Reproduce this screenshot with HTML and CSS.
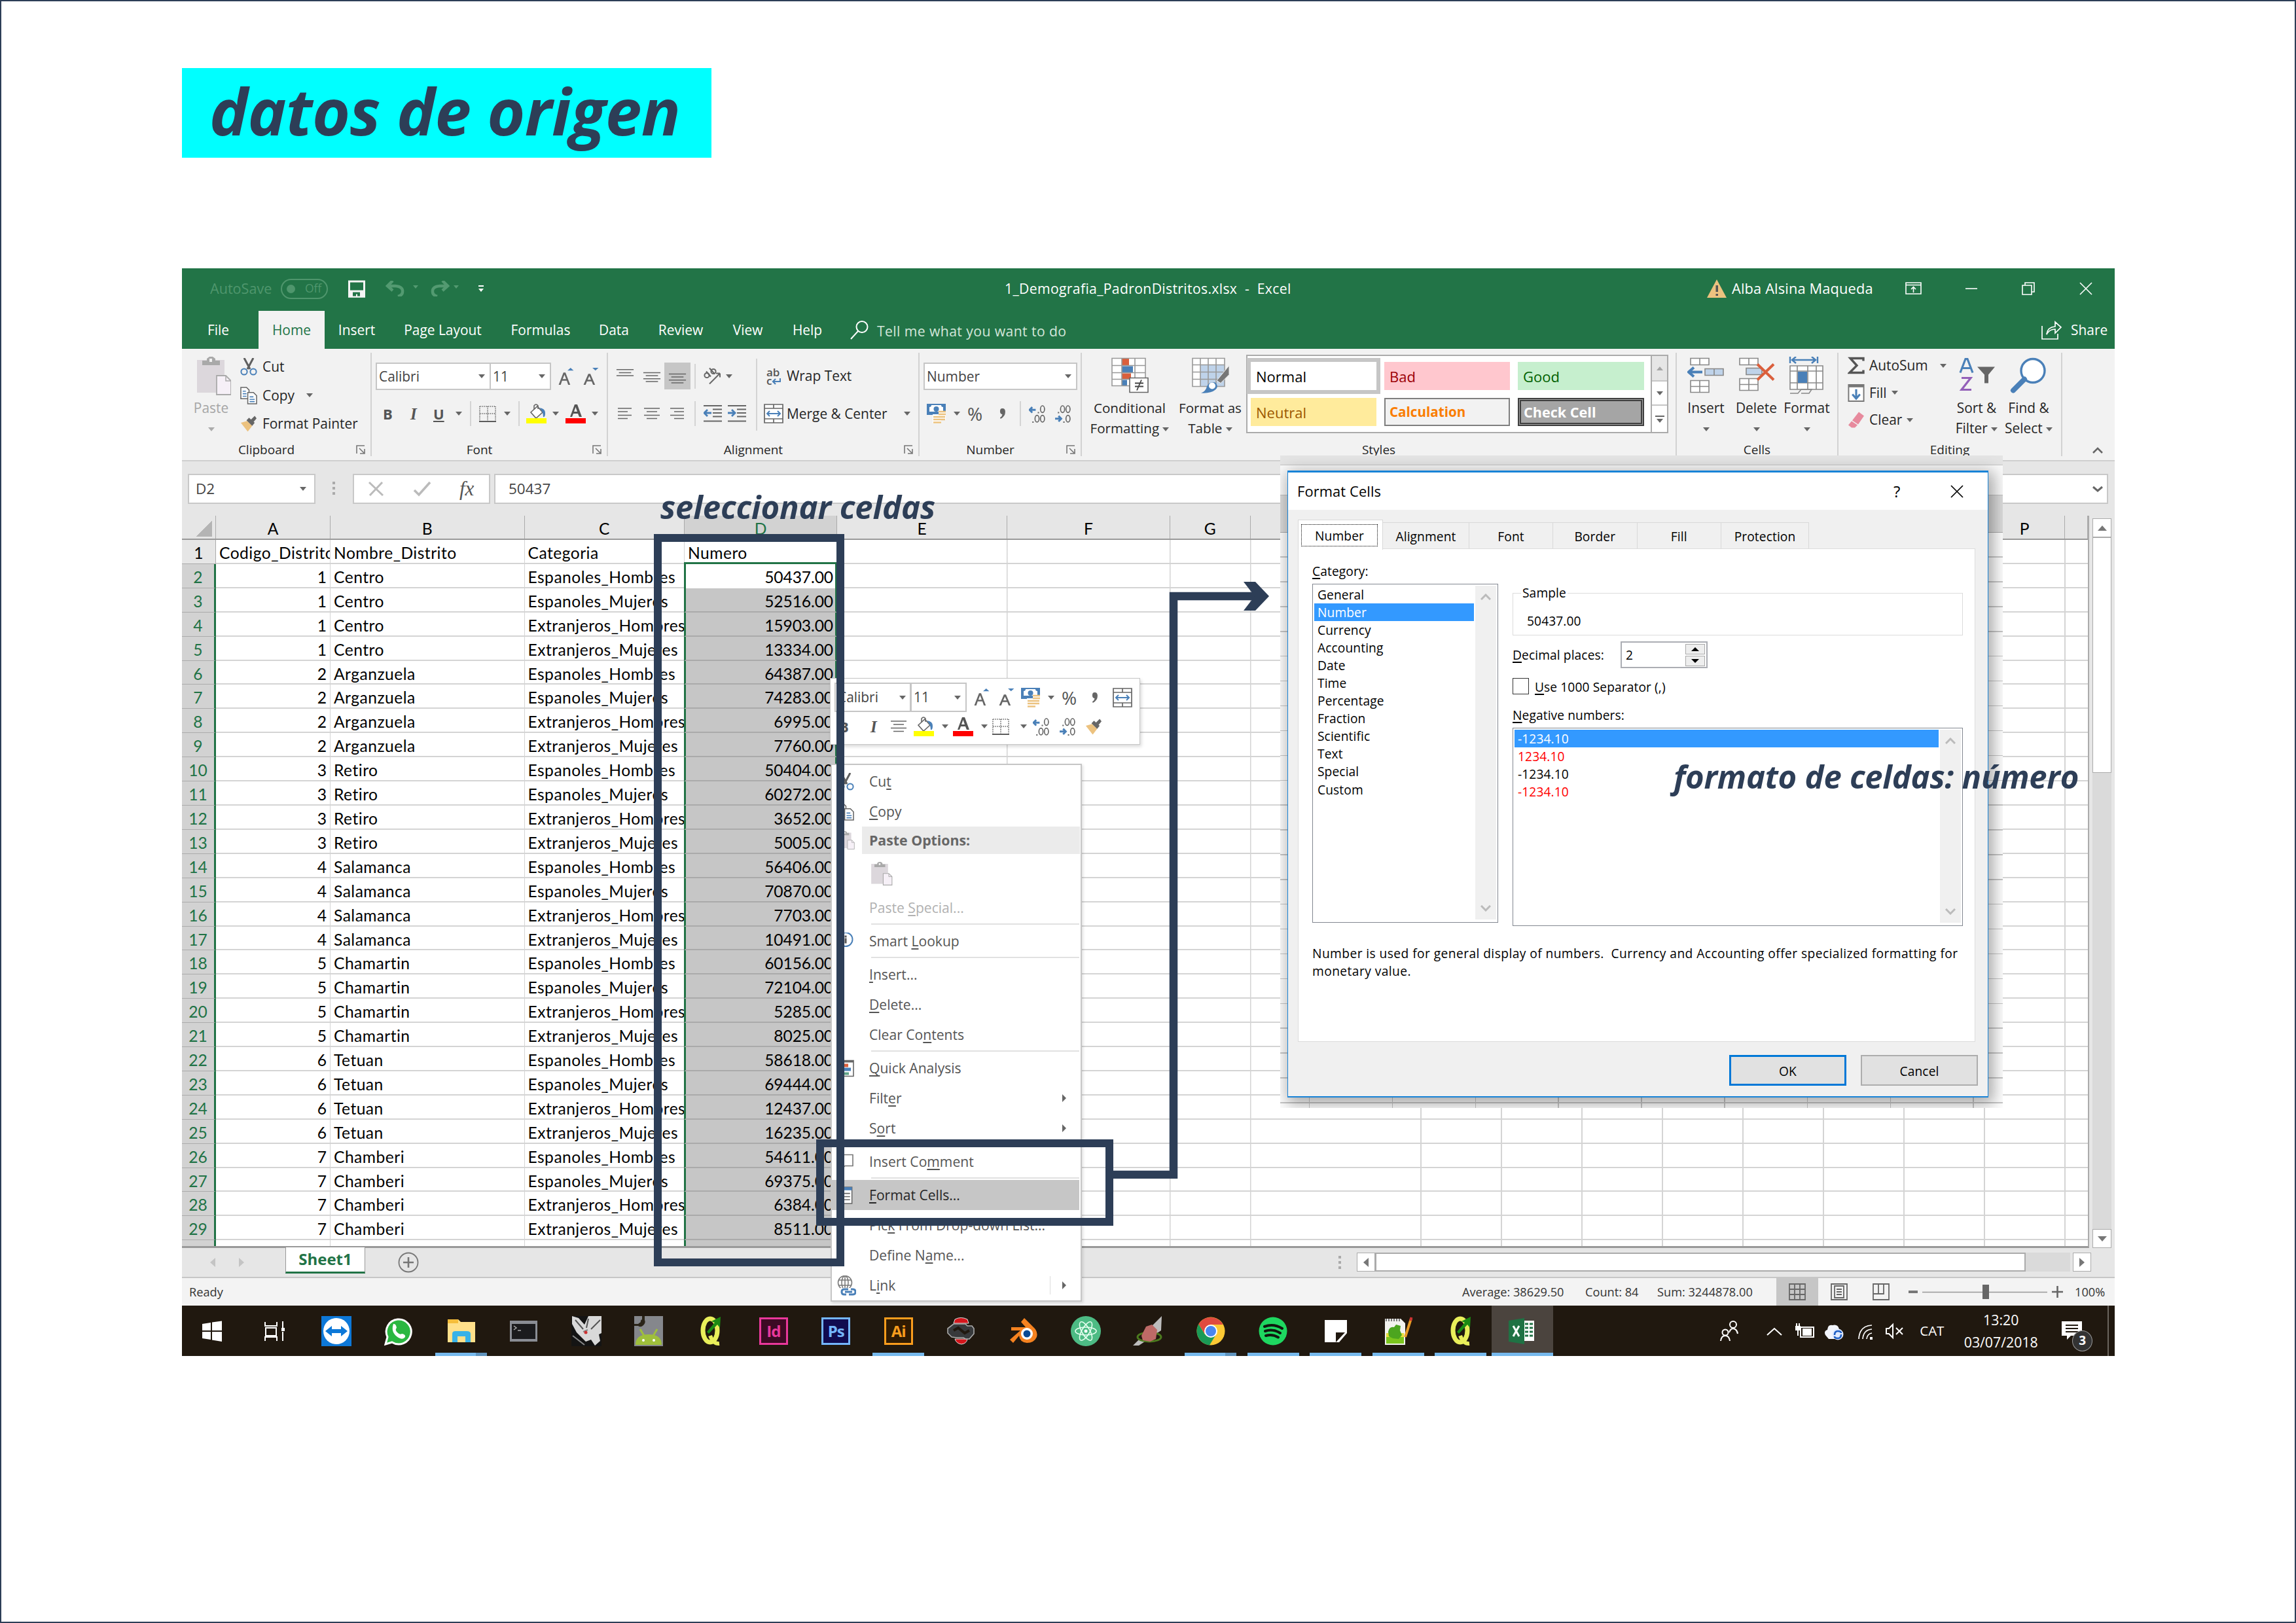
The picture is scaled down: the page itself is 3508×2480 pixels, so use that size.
FILE: index.html
```html
<!DOCTYPE html>
<html lang="es">
<head>
<meta charset="utf-8">
<title>datos de origen</title>
<link rel="stylesheet" href="styles.css">
</head>
<body>
<svg width="0" height="0" class="defs" aria-hidden="true">
  <symbol id="caret" viewBox="0 0 10 6"><path d="M0 0h10L5 6z" fill="#666"/></symbol>
  <symbol id="launch" viewBox="0 0 14 14"><path d="M1 13V1h12M5 5l7 7M13 6v7H6" fill="none" stroke="#777" stroke-width="1.6"/></symbol>
  <symbol id="paste" viewBox="0 0 52 59"><path d="M0 5h42v50H0z" fill="#dcd7dc"/><path d="M8 6h7V3l4-3h5l4 3v3h7v7H8z" fill="#a9a9a9"/><rect x="19" y="3" width="4" height="5" fill="#f2f2f2"/><path d="M30 29h14l8 8v21H30z" fill="#f6f0f7" stroke="#aaa" stroke-width="1.8"/><path d="M44 29v8h8" fill="none" stroke="#aaa" stroke-width="1.5"/></symbol>
  <symbol id="cut" viewBox="0 0 26 27"><path d="M6 0l9 17M20 0l-9 17" stroke="#5f5f5f" stroke-width="3" fill="none"/><circle cx="6" cy="21" r="4.6" fill="none" stroke="#4a80b8" stroke-width="2"/><circle cx="20" cy="21" r="4.6" fill="none" stroke="#4a80b8" stroke-width="2"/></symbol>
  <symbol id="copy" viewBox="0 0 27 28"><path d="M1 1h9l4 4v14H1z" fill="#fff" stroke="#666" stroke-width="1.6"/><path d="M12 9h9l5 5v13H12z" fill="#fff" stroke="#666" stroke-width="1.6"/><path d="M4 7h5M4 11h6M4 15h6M15 16h6M15 20h8M15 23.500h8" stroke="#4a80b8" stroke-width="1.7"/></symbol>
  <symbol id="brush" viewBox="0 0 27 25"><path d="M1 11l10-3 8 8-7 9z" fill="#ecc27f"/><path d="M10 7l4-4 9 8-4 5z" fill="#666"/><path d="M17 6l6-6 3 4-5 6z" fill="#666"/></symbol>
  <symbol id="growA" viewBox="0 0 24 26"><path d="M1 25L8 7h3l7 18h-3l-2-6H6l-2 6zM7 16.500h5L9.500 10z" fill="#666" fill-rule="evenodd"/><path d="M14 4l4.500-4L23 4z" fill="#4a80b8"/></symbol>
  <symbol id="shrinkA" viewBox="0 0 24 26"><path d="M1 25L8 9h3l7 16h-3l-2-5H6l-2 5zM7 17.500h5l-2.500-5.500z" fill="#666" fill-rule="evenodd"/><path d="M14 0h9l-4.500 4z" fill="#4a80b8"/></symbol>
  <symbol id="borders" viewBox="0 0 27 26"><path d="M1 1h25M1 12.500h25M1 1v23M13.500 1v23M26 1v23" stroke="#666" stroke-width="1.6" stroke-dasharray="1.6 1.6" fill="none"/><path d="M0 25h27" stroke="#555" stroke-width="2"/></symbol>
  <symbol id="bucket" viewBox="0 0 31 30"><path d="M7 13l10-9 8 9-10 9z" fill="#fff" stroke="#666" stroke-width="1.6"/><path d="M12 9V3q3-4 6 0v5" fill="none" stroke="#666" stroke-width="1.6"/><path d="M20 6q9 1 9 8t-3 6q0-8-6-14z" fill="#4a80b8"/><path d="M0 22h31v8H0z" fill="#ff0"/></symbol>
  <symbol id="fontcol" viewBox="0 0 31 30"><path d="M7 20L14 1h4l7 19h-4l-2-5h-7l-2 5zM13 12h5l-2.500-7z" fill="#555" fill-rule="evenodd"/><path d="M0 22h31v8H0z" fill="#f00"/></symbol>
  <symbol id="al-top" viewBox="0 0 28 30"><path d="M0 4h28M4 9h20M0 14h28" stroke="#666" stroke-width="1.6"/></symbol>
  <symbol id="al-mid" viewBox="0 0 28 30"><path d="M0 9h28M4 14h20M0 19h28M4 23.500h20" stroke="#666" stroke-width="1.6"/></symbol>
  <symbol id="al-left" viewBox="0 0 28 18"><path d="M0 1h21M0 6h15M0 11.500h21M0 16.500h15" stroke="#666" stroke-width="1.7"/></symbol>
  <symbol id="al-center" viewBox="0 0 28 18"><path d="M2 1h24M6 6h16M2 11.500h24M6 16.500h16" stroke="#666" stroke-width="1.7"/></symbol>
  <symbol id="al-right" viewBox="0 0 28 18"><path d="M0 1h21M6 6h15M0 11.500h21M6 16.500h15" stroke="#666" stroke-width="1.7"/></symbol>
  <symbol id="orient" viewBox="0 0 28 27"><g fill="none" stroke="#666" stroke-width="2"><circle cx="5" cy="12" r="3.600"/><path d="M4 6l7 8M9 1l8 9M9 25L25 9M25 9h-6M25 9v6"/><circle cx="15" cy="6" r="3.600"/></g></symbol>
  <symbol id="outdent" viewBox="0 0 28 26"><path d="M0 1h28M14 6.500h14M14 12h14M14 17.500h14M0 24.500h28" stroke="#666" stroke-width="1.8"/><path d="M12 12H2M6 7l-5 5 5 5" stroke="#4a80b8" stroke-width="2.8" fill="none"/></symbol>
  <symbol id="indent" viewBox="0 0 28 26"><path d="M0 1h28M14 6.500h14M14 12h14M14 17.500h14M0 24.500h28" stroke="#666" stroke-width="1.8"/><path d="M0 12h10M6 7l5 5-5 5" stroke="#4a80b8" stroke-width="2.8" fill="none"/></symbol>
  <symbol id="merge" viewBox="0 0 30 30"><path d="M1 1h28v28H1zM1 7h28M1 23h28M15 1v6M15 23v6" fill="#fff" stroke="#666" stroke-width="1.7"/><path d="M5 15h20M9 11l-4 4 4 4M21 11l4 4-4 4" stroke="#4a80b8" stroke-width="2" fill="none"/></symbol>
  <symbol id="money" viewBox="0 0 30 30"><path d="M0 0h29v17H0z" fill="#4a80b8"/><path d="M4 5q3 0 3-3h15q0 3 3 3v7H4z" fill="#fff"/><circle cx="14.500" cy="8" r="4" fill="#4a80b8"/><path d="M9 16h13v14H9z" fill="#fff"/><path d="M18 11h11v14H18z" fill="#fff"/><path d="M18 12h11M18 16h11M10 20h18M10 24h18M10 28.500h12" stroke="#ecc27f" stroke-width="2.6"/></symbol>
  <symbol id="decinc" viewBox="0 0 25 26"><path d="M10 7H1M5 3L1 7l4 4" stroke="#4a80b8" stroke-width="2.800" fill="none"/><g fill="none" stroke="#666" stroke-width="1.600"><ellipse cx="20" cy="6" rx="3" ry="5"/><ellipse cx="12" cy="20" rx="3" ry="5"/><ellipse cx="20" cy="20" rx="3" ry="5"/></g><path d="M13 10h2v2h-2zM5 24h2v2H5z" fill="#666"/></symbol>
  <symbol id="decdec" viewBox="0 0 25 26"><path d="M1 20h9M6 16l4 4-4 4" stroke="#4a80b8" stroke-width="2.800" fill="none"/><g fill="none" stroke="#666" stroke-width="1.600"><ellipse cx="12" cy="6" rx="3" ry="5"/><ellipse cx="20" cy="6" rx="3" ry="5"/><ellipse cx="20" cy="20" rx="3" ry="5"/></g><path d="M5 10h2v2H5zM13 24h2v2h-2z" fill="#666"/></symbol>
  <symbol id="comma" viewBox="0 0 10 18"><path d="M1 5q0-5 4-5 5 0 5 6 0 8-8 12l-1-2q4-3 4-6-4 0-4-5z" fill="#666"/></symbol>
  <symbol id="qgis" viewBox="0 0 46 46"><ellipse cx="22" cy="22" rx="11" ry="18" fill="none" stroke="#e9ef5a" stroke-width="7"/><path d="M22 30q5 13 14 12" fill="none" stroke="#e9ef5a" stroke-width="6"/><path d="M17 24l12-14-5-2L38 1l-1 17-4-5-13 14z" fill="#1c8a14"/></symbol>
</svg>

<main class="slide">
  <h1 class="title">datos de origen</h1>

  <div class="window">
    <header class="titlebar">
      <span class="autosave">AutoSave</span>
      <span class="toggle"><i></i>Off</span>
      <svg class="i26 save" viewBox="0 0 26 26"><path d="M1.500 1.500h23v23h-23z" fill="none" stroke="#f5f5f5" stroke-width="3"/><path d="M0 15h26v11H0z" fill="#f5f5f5"/><path d="M7 18h11v6h-4v-3h-2v3H7z" fill="#227447"/></svg>
      <svg class="undo" viewBox="0 0 112 24"><g fill="none" stroke="#539a71" stroke-width="4.500"><path d="M3 8h12q12 1 11 9 0 5-7 7M11 0L3 8l8 7"/><path d="M95 8H83q-12 1-11 9 0 5 7 7M87 0l8 8-8 7"/></g><path d="M42 7h8l-4 5zM112 7h-8l4 5z" fill="#539a71"/></svg>
      <svg class="qat" viewBox="0 0 8 10"><path d="M0 0h8v2H0zM0 5h8L4 10z" fill="#fff"/></svg>
      <span class="doc">1_Demografia_PadronDistritos.xlsx&nbsp; -&nbsp; Excel</span>
      <svg class="warn" viewBox="0 0 30 28"><path d="M15 0l15 28H0z" fill="#ecc27f"/><path d="M13.500 9h3.500v10h-3.500zM13.500 22h3.500v3h-3.500z" fill="#555"/></svg>
      <span class="user">Alba Alsina Maqueda</span>
      <svg class="winbtns" viewBox="0 0 286 20"><g fill="none" stroke="#fff" stroke-width="1.600"><path d="M1 1h23v17H1zM1 4.500h23M12.500 16V8M9 11l3.500-3.500L16 11"/><path d="M92 10h18"/><path d="M179 5h14v14h-14zM183 5V1h14v14h-4"/><path d="M267 1l18 18M285 1l-18 18"/></g></svg>
    </header>

    <nav class="tabs">
      <span>File</span><span class="on">Home</span><span>Insert</span><span>Page Layout</span><span>Formulas</span><span>Data</span><span>Review</span><span>View</span><span>Help</span>
      <svg class="search" viewBox="0 0 28 29"><circle cx="18" cy="9.500" r="8.500" fill="none" stroke="#fff" stroke-width="2"/><path d="M12 16L1 28" stroke="#fff" stroke-width="2"/></svg>
      <span class="tell">Tell me what you want to do</span>
      <svg class="share-i" viewBox="0 0 32 29"><path d="M1 8v20h24v-8M8 21q1-11 13-12V2l9 8-9 9v-6q-9 0-13 8z" fill="none" stroke="#fff" stroke-width="1.700"/></svg>
      <span class="share">Share</span>
    </nav>

    <section class="ribbon">
      <div class="grp clip">
        <div class="body">
          <div class="big paste-b"><svg class="ic" viewBox="0 0 52 59"><use href="#paste"/></svg><span>Paste</span><span><svg class="caret faint"><use href="#caret"/></svg></span></div>
          <div class="cmds">
            <div><svg class="i26"><use href="#cut"/></svg>Cut</div>
            <div><svg class="i26"><use href="#copy"/></svg>Copy<svg class="caret far"><use href="#caret"/></svg></div>
            <div><svg class="i26"><use href="#brush"/></svg>Format Painter</div>
          </div>
        </div>
        <div class="foot"><span>Clipboard</span><svg class="launch"><use href="#launch"/></svg></div>
      </div>
      <i class="vsep"></i>
      <div class="grp font">
        <div class="body stack">
          <div class="r1">
            <span class="combo">Calibri<svg class="caret"><use href="#caret"/></svg></span>
            <span class="combo size">11<svg class="caret"><use href="#caret"/></svg></span>
            <svg class="i26"><use href="#growA"/></svg><svg class="i26"><use href="#shrinkA"/></svg>
          </div>
          <div class="r2">
            <b>B</b><em>I</em><u>U</u><svg class="caret"><use href="#caret"/></svg><i class="ssep"></i>
            <svg class="i26"><use href="#borders"/></svg><svg class="caret"><use href="#caret"/></svg><i class="ssep"></i>
            <svg class="i31"><use href="#bucket"/></svg><svg class="caret"><use href="#caret"/></svg>
            <svg class="i31"><use href="#fontcol"/></svg><svg class="caret"><use href="#caret"/></svg>
          </div>
        </div>
        <div class="foot"><span>Font</span><svg class="launch"><use href="#launch"/></svg></div>
      </div>
      <i class="vsep"></i>
      <div class="grp align">
        <div class="body">
          <div class="stack al-l">
            <div class="r1"><svg class="i28"><use href="#al-top"/></svg><svg class="i28"><use href="#al-mid"/></svg><span class="pressed"><svg class="i28"><use href="#al-mid"/></svg></span><i class="ssep"></i><svg class="i28"><use href="#orient"/></svg><svg class="caret"><use href="#caret"/></svg></div>
            <div class="r2"><svg class="lines"><use href="#al-left"/></svg><svg class="lines"><use href="#al-center"/></svg><svg class="lines"><use href="#al-right"/></svg><i class="ssep"></i><svg class="i28"><use href="#outdent"/></svg><svg class="i28"><use href="#indent"/></svg></div>
          </div>
          <i class="msep"></i>
          <div class="stack al-r">
            <div class="r1"><span class="abc">ab<br>c<svg viewBox="0 0 14 10"><path d="M13 0v5H3M6 1L2 5l4 4" fill="none" stroke="#4a80b8" stroke-width="2.200"/></svg></span><span>Wrap Text</span></div>
            <div class="r2"><svg class="i30"><use href="#merge"/></svg><span>Merge &amp; Center</span><svg class="caret"><use href="#caret"/></svg></div>
          </div>
        </div>
        <div class="foot"><span>Alignment</span><svg class="launch"><use href="#launch"/></svg></div>
      </div>
      <i class="vsep"></i>
      <div class="grp number">
        <div class="body stack">
          <div class="r1"><span class="combo">Number<svg class="caret"><use href="#caret"/></svg></span></div>
          <div class="r2"><svg class="i30"><use href="#money"/></svg><svg class="caret"><use href="#caret"/></svg><span class="pct">%</span><svg class="comma"><use href="#comma"/></svg><i class="ssep"></i><svg class="i26"><use href="#decinc"/></svg><svg class="i26"><use href="#decdec"/></svg></div>
        </div>
        <div class="foot"><span>Number</span><svg class="launch"><use href="#launch"/></svg></div>
      </div>
      <i class="vsep"></i>
      <div class="grp styles">
        <div class="body">
          <div class="big cond"><svg class="ic" viewBox="0 0 57 54"><path d="M1 1h51v42H1z" fill="#fff"/><path d="M16 1h11v11H16zM16 24h14v9H16z" fill="#da5f3c"/><path d="M16 13h17v10H16zM16 34h8v9h-8z" fill="#4a80b8"/><path d="M1 1h51v42H1zM1 12h51M1 23h51M1 33h51M16 1v42M36 1v42" fill="none" stroke="#999" stroke-width="1.600"/><path d="M28 31h28v22H28z" fill="#fff" stroke="#666" stroke-width="1.600"/><path d="M36 39h13M36 44h13M46 34l-7 16" stroke="#444" stroke-width="1.800"/></svg><span>Conditional</span><span>Formatting <svg class="caret"><use href="#caret"/></svg></span></div>
          <div class="big fmt"><svg class="ic" viewBox="0 0 57 54"><path d="M1 1h49v43H1z" fill="#fff"/><path d="M13 11h37v33H13z" fill="#bfd3ea"/><path d="M1 1h49v43H1zM1 11h49M1 22h49M1 33h49M13 1v43M25 1v43M37 1v43" fill="none" stroke="#999" stroke-width="1.600"/><path d="M57 12v14L44 39l-6-4z" fill="#777" stroke="#f2f2f2"/><path d="M14 54q7-2 9-10 4-8 13-6 6 6 0 11-7 6-22 5z" fill="#4a80b8"/><circle cx="31" cy="43" r="5" fill="#fff"/></svg><span>Format as</span><span>Table <svg class="caret"><use href="#caret"/></svg></span></div>
          <div class="gallery">
            <div class="swatches">
              <span class="sw normal">Normal</span><span class="sw bad">Bad</span><span class="sw good">Good</span>
              <span class="sw neutral">Neutral</span><span class="sw calc">Calculation</span><span class="sw check">Check Cell</span>
            </div>
            <div class="gscroll"><span><svg class="caret up faint"><use href="#caret"/></svg></span><span><svg class="caret"><use href="#caret"/></svg></span><span class="more"><svg class="caret"><use href="#caret"/></svg></span></div>
          </div>
        </div>
        <div class="foot"><span>Styles</span></div>
      </div>
      <i class="vsep"></i>
      <div class="grp cells-g">
        <div class="body">
          <div class="big"><svg class="ic" viewBox="0 0 57 54"><g fill="#fff" stroke="#888" stroke-width="1.600"><path d="M5 1h28v10H5zM19 1v10M5 35h28v18H5zM19 35v18M5 44h28"/><path d="M27 17h28v10H27zM41 17v10" fill="#bfd3ea"/></g><path d="M23 22H3M10 15l-8 7 8 7" stroke="#4a80b8" stroke-width="4" fill="none"/></svg><span>Insert</span><span><svg class="caret"><use href="#caret"/></svg></span></div>
          <div class="big"><svg class="ic" viewBox="0 0 57 54"><g fill="#fff" stroke="#888" stroke-width="1.600"><path d="M3 1h28v10H3zM17 1v10M3 32h28v18H3zM17 32v18M3 41h28"/><path d="M13 16h24v10H13z" fill="#bfd3ea"/></g><path d="M30 10l25 24M55 10L30 34" stroke="#da5f3c" stroke-width="4"/></svg><span>Delete</span><span><svg class="caret"><use href="#caret"/></svg></span></div>
          <div class="big"><svg class="ic" viewBox="0 0 57 57"><path d="M3 0v10M45 0v10M7 5h34M12 0L6 5l6 5M36 0l6 5-6 5" stroke="#4a80b8" stroke-width="2.400" fill="none"/><path d="M3 14h50v36H3z" fill="#fff"/><path d="M3 14h50v36H3zM3 22h50M3 40h50M14 14v36M30 14v36M43 14v36" stroke="#888" stroke-width="1.600" fill="none"/><path d="M15 23h14v17H15z" fill="#4a80b8"/><path d="M3 56h12l5-6h16l-4 6H20" fill="none" stroke="#888" stroke-width="1.500"/></svg><span>Format</span><span><svg class="caret"><use href="#caret"/></svg></span></div>
        </div>
        <div class="foot"><span>Cells</span></div>
      </div>
      <i class="vsep"></i>
      <div class="grp editing">
        <div class="body">
          <div class="cmds">
            <div><svg class="i26" viewBox="0 0 26 26"><path d="M24 6V2H4l10 11L3 24h21v-4" fill="none" stroke="#555" stroke-width="3.400"/></svg>AutoSum<svg class="caret far"><use href="#caret"/></svg></div>
            <div><svg class="i26" viewBox="0 0 26 28"><path d="M1 1h24v26H1z" fill="#fff" stroke="#777" stroke-width="2"/><path d="M1 1h24v4H1z" fill="#777"/><path d="M13 8v15M7 16l6 7 6-7" fill="none" stroke="#4a80b8" stroke-width="3.200"/></svg>Fill<svg class="caret"><use href="#caret"/></svg></div>
            <div><svg class="i26" viewBox="0 0 26 26"><path d="M17 1l8 6-9 13-9-6z" fill="#e78a9d"/><path d="M6 15l9 6-4 4H6l-5-4z" fill="#e78a9d"/></svg>Clear<svg class="caret"><use href="#caret"/></svg></div>
          </div>
          <div class="big sort"><svg class="ic" viewBox="0 0 57 54"><path d="M3 23L11 2h3l8 21M6 16h13" fill="none" stroke="#4a80b8" stroke-width="3.200"/><path d="M5 31h14L5 49h15" fill="none" stroke="#9360b8" stroke-width="3.200"/><path d="M29 14h27L46 26v13h-6V26z" fill="#666"/></svg><span>Sort &amp;</span><span>Filter <svg class="caret"><use href="#caret"/></svg></span></div>
          <div class="big find"><svg class="ic" viewBox="0 0 57 54"><circle cx="35" cy="20" r="18" fill="#fff" stroke="#4a80b8" stroke-width="3.400"/><path d="M22 33L5 50" stroke="#4a80b8" stroke-width="8" stroke-linecap="round"/></svg><span>Find &amp;</span><span>Select <svg class="caret"><use href="#caret"/></svg></span></div>
        </div>
        <div class="foot"><span>Editing</span></div>
      </div>
      <i class="vsep"></i>
      <svg class="collapse" viewBox="0 0 18 10"><path d="M2 9l7-7 7 7" fill="none" stroke="#666" stroke-width="2.600"/></svg>
    </section>

    <section class="fbar">
      <div class="box name">D2<svg class="caret"><use href="#caret"/></svg></div>
      <i class="dots"></i>
      <div class="box fx"><svg viewBox="0 0 100 24"><path d="M2 2l21 20M22 2L3 22" stroke="#bbb" stroke-width="3"/><path d="M71 14l7 7L95 2" fill="none" stroke="#bbb" stroke-width="3.600"/></svg><em>fx</em></div>
      <div class="box input">50437<svg class="chev" viewBox="0 0 16 10"><path d="M1 2l7 6 7-6" fill="none" stroke="#666" stroke-width="3"/></svg></div>
    </section>

    <section class="sheet">
      <div class="grid">
        <div class="cols"><span class="corner"></span><span>A</span><span>B</span><span>C</span><span class="sel">D</span><span>E</span><span>F</span><span>G</span><span></span><span></span><span></span><span></span><span></span><span></span><span></span><span></span><span>P</span><span></span></div>
        <div class="rows">
          <div class="row"><span class="rh">1</span><span>Codigo_Distrito</span><span>Nombre_Distrito</span><span>Categoria</span><span>Numero</span></div>
          <div class="row s first"><span class="rh">2</span><span class="n">1</span><span>Centro</span><span>Espanoles_Hombres</span><span class="n v">50437.00</span></div>
          <div class="row s"><span class="rh">3</span><span class="n">1</span><span>Centro</span><span>Espanoles_Mujeres</span><span class="n v">52516.00</span></div>
          <div class="row s"><span class="rh">4</span><span class="n">1</span><span>Centro</span><span>Extranjeros_Hombres</span><span class="n v">15903.00</span></div>
          <div class="row s"><span class="rh">5</span><span class="n">1</span><span>Centro</span><span>Extranjeros_Mujeres</span><span class="n v">13334.00</span></div>
          <div class="row s"><span class="rh">6</span><span class="n">2</span><span>Arganzuela</span><span>Espanoles_Hombres</span><span class="n v">64387.00</span></div>
          <div class="row s"><span class="rh">7</span><span class="n">2</span><span>Arganzuela</span><span>Espanoles_Mujeres</span><span class="n v">74283.00</span></div>
          <div class="row s"><span class="rh">8</span><span class="n">2</span><span>Arganzuela</span><span>Extranjeros_Hombres</span><span class="n v">6995.00</span></div>
          <div class="row s"><span class="rh">9</span><span class="n">2</span><span>Arganzuela</span><span>Extranjeros_Mujeres</span><span class="n v">7760.00</span></div>
          <div class="row s"><span class="rh">10</span><span class="n">3</span><span>Retiro</span><span>Espanoles_Hombres</span><span class="n v">50404.00</span></div>
          <div class="row s"><span class="rh">11</span><span class="n">3</span><span>Retiro</span><span>Espanoles_Mujeres</span><span class="n v">60272.00</span></div>
          <div class="row s"><span class="rh">12</span><span class="n">3</span><span>Retiro</span><span>Extranjeros_Hombres</span><span class="n v">3652.00</span></div>
          <div class="row s"><span class="rh">13</span><span class="n">3</span><span>Retiro</span><span>Extranjeros_Mujeres</span><span class="n v">5005.00</span></div>
          <div class="row s"><span class="rh">14</span><span class="n">4</span><span>Salamanca</span><span>Espanoles_Hombres</span><span class="n v">56406.00</span></div>
          <div class="row s"><span class="rh">15</span><span class="n">4</span><span>Salamanca</span><span>Espanoles_Mujeres</span><span class="n v">70870.00</span></div>
          <div class="row s"><span class="rh">16</span><span class="n">4</span><span>Salamanca</span><span>Extranjeros_Hombres</span><span class="n v">7703.00</span></div>
          <div class="row s"><span class="rh">17</span><span class="n">4</span><span>Salamanca</span><span>Extranjeros_Mujeres</span><span class="n v">10491.00</span></div>
          <div class="row s"><span class="rh">18</span><span class="n">5</span><span>Chamartin</span><span>Espanoles_Hombres</span><span class="n v">60156.00</span></div>
          <div class="row s"><span class="rh">19</span><span class="n">5</span><span>Chamartin</span><span>Espanoles_Mujeres</span><span class="n v">72104.00</span></div>
          <div class="row s"><span class="rh">20</span><span class="n">5</span><span>Chamartin</span><span>Extranjeros_Hombres</span><span class="n v">5285.00</span></div>
          <div class="row s"><span class="rh">21</span><span class="n">5</span><span>Chamartin</span><span>Extranjeros_Mujeres</span><span class="n v">8025.00</span></div>
          <div class="row s"><span class="rh">22</span><span class="n">6</span><span>Tetuan</span><span>Espanoles_Hombres</span><span class="n v">58618.00</span></div>
          <div class="row s"><span class="rh">23</span><span class="n">6</span><span>Tetuan</span><span>Espanoles_Mujeres</span><span class="n v">69444.00</span></div>
          <div class="row s"><span class="rh">24</span><span class="n">6</span><span>Tetuan</span><span>Extranjeros_Hombres</span><span class="n v">12437.00</span></div>
          <div class="row s"><span class="rh">25</span><span class="n">6</span><span>Tetuan</span><span>Extranjeros_Mujeres</span><span class="n v">16235.00</span></div>
          <div class="row s"><span class="rh">26</span><span class="n">7</span><span>Chamberi</span><span>Espanoles_Hombres</span><span class="n v">54611.00</span></div>
          <div class="row s"><span class="rh">27</span><span class="n">7</span><span>Chamberi</span><span>Espanoles_Mujeres</span><span class="n v">69375.00</span></div>
          <div class="row s"><span class="rh">28</span><span class="n">7</span><span>Chamberi</span><span>Extranjeros_Hombres</span><span class="n v">6384.00</span></div>
          <div class="row s"><span class="rh">29</span><span class="n">7</span><span>Chamberi</span><span>Extranjeros_Mujeres</span><span class="n v">8511.00</span></div>
          <div class="row s"><span class="rh">30</span><span class="n"></span><span>Fuencarral-El Pardo</span><span>Espanoles_Hombres</span><span class="n v"></span></div>
        </div>
      </div>
      <div class="vscroll"><span class="sb"><svg viewBox="0 0 14 8"><path d="M0 8h14L7 0z" fill="#777"/></svg></span><span class="thumb"></span><span class="track"></span><span class="sb"><svg viewBox="0 0 14 8"><path d="M0 0h14L7 8z" fill="#777"/></svg></span></div>
    </section>

    <section class="sheettabs">
      <svg class="arrows" viewBox="0 0 52 14"><path d="M8 0v14L0 7zM44 0v14l8-7z" fill="#c4c4c4"/></svg>
      <span class="stab">Sheet1</span>
      <svg class="plus" viewBox="0 0 32 32"><circle cx="16" cy="16" r="14.500" fill="none" stroke="#777" stroke-width="1.800"/><path d="M8 16h16M16 8v16" stroke="#777" stroke-width="2.600"/></svg>
      <i class="dots"></i>
      <span class="hb"><svg viewBox="0 0 8 14"><path d="M8 0v14L0 7z" fill="#777"/></svg></span><span class="hthumb"></span><span class="htrack"></span><span class="hb right"><svg viewBox="0 0 8 14"><path d="M0 0v14l8-7z" fill="#777"/></svg></span>
    </section>

    <section class="status">
      <span class="ready">Ready</span><span class="avg">Average: 38629.50</span><span class="cnt">Count: 84</span><span class="sum">Sum: 3244878.00</span>
      <span class="vw on"><svg viewBox="0 0 26 26"><path d="M1 1h24v24H1zM1 9h24M1 17h24M9 1v24M17 1v24" fill="none" stroke="#666" stroke-width="1.800"/></svg></span>
      <span class="vw"><svg viewBox="0 0 26 26"><path d="M1 1h24v24H1zM6 4h14v18H6zM9 9h8M9 13h8M9 17h8" fill="none" stroke="#666" stroke-width="1.800"/></svg></span>
      <span class="vw"><svg viewBox="0 0 26 26"><path d="M1 1h24v24H1zM1 16h16V1M9 1v15" fill="none" stroke="#666" stroke-width="1.800"/></svg></span>
      <svg class="zoomer" viewBox="0 0 236 22"><path d="M0 9h14v4H0z" fill="#777"/><path d="M21 11.500h191" stroke="#999" stroke-width="1.400"/><path d="M113 0h10v22h-10z" fill="#666"/><path d="M219 11h17M227.500 2v18" stroke="#666" stroke-width="2.600"/></svg>
      <span class="pc">100%</span>
    </section>

    <footer class="taskbar">
      <div class="apps">
        <span><svg viewBox="0 0 46 46"><path d="M8 12l13-2v12H8zM23 9.500l15-2V22H23zM8 24h13v12L8 34zM23 24h15v15l-15-2.500z" fill="#fff"/></svg></span>
        <span><svg viewBox="0 0 46 46"><path d="M9 9v6h18V9M10 18h16v12H10zM9 38v-6h18v6M36 8v10M36 24v14" fill="none" stroke="#fff" stroke-width="2"/><path d="M34 18h5v5h-5z" fill="#fff"/></svg></span>
        <span><svg viewBox="0 0 46 46"><path d="M0 0h46v46H0z" fill="#0d78d8"/><circle cx="23" cy="23" r="20" fill="#fff"/><path d="M6 23l10-8v5h14v-5l10 8-10 8v-5H16v5z" fill="#0d78d8"/></svg></span>
        <span><svg viewBox="0 0 46 46"><path d="M3 43l3-11a19 19 0 1 1 7 8z" fill="#2bb741" stroke="#fff" stroke-width="3"/><path d="M15 12q4-1 5 6-3 3 1 7t7 2q6 1 5 5-4 6-13-1T15 12z" fill="#fff"/></svg></span>
        <span class="run dbl"><svg viewBox="0 0 46 46"><path d="M2 5h16l4 4h22v31H2z" fill="#ffe08a"/><path d="M2 5h16v6H2z" fill="#f5bd3a"/><path d="M9 40V27q0-4 5-4h17q6 0 6 4v13h-8V31H17v9z" fill="#38b2e8"/></svg></span>
        <span><svg viewBox="0 0 46 46"><path d="M2 7h42v32H2z" fill="#8a8d94"/><path d="M5 12h36v23H5z" fill="#1b1b1d"/><path d="M8 15l4 3-4 3M14 22h5" stroke="#aaa" stroke-width="1.500" fill="none"/></svg></span>
        <span><svg viewBox="0 0 46 46"><path d="M0 0h46v46H0z" fill="#141414"/><path d="M1 0l10 3 9 10L26 0h20v26l-4 2 2 10-8 7-6-9-8 3L8 25 1 12z" fill="#d9d9d9"/><path d="M6 6l12 14M26 4l-3 14M44 6L30 20" stroke="#555" stroke-width="2"/><path d="M18 24l7-3M2 30l18 14" stroke="#888" stroke-width="2"/><circle cx="22" cy="25" r="2.500" fill="#c33"/></svg></span>
        <span><svg viewBox="0 0 46 46"><path d="M1 0h44v46H1z" fill="#85878c"/><path d="M13 0v5q-3 2-2 4l-4 3H1v3h6q4 3 8-1 4-4 2-8V0z" fill="#2a2418"/><path d="M3 44q0-16 20-16t20 16z" fill="#9fbf3b"/><path d="M10 20l6 10M36 20l-6 10" stroke="#9fbf3b" stroke-width="3"/><circle cx="15" cy="37" r="2" fill="#fff"/><circle cx="31" cy="37" r="2" fill="#fff"/></svg></span>
        <span><svg><use href="#qgis"/></svg></span>
        <span><b class="adobe id">Id</b></span>
        <span><b class="adobe ps">Ps</b></span>
        <span class="run"><b class="adobe ai">Ai</b></span>
        <span><svg viewBox="0 0 46 46"><path d="M14 5q9-5 19 0l2 6H12zM14 35h19q-1 7-9 8-8-1-10-8z" fill="#d4161c" stroke="#ddd"/><path d="M12 12h18l3 3h7l3 4v8l-7 8h-6l-3-2H17l-8-1-6-6v-7z" fill="#37393b" stroke="#aaa" stroke-width="1.600"/><path d="M12 22l7-4 10 8 7-4" stroke="#20180f" stroke-width="4" fill="none"/></svg></span>
        <span><svg viewBox="0 0 46 46"><path d="M2 36l16-14H4v-5h22l-7-8 5-6 16 16q5 6 3 13-4 9-15 9-11-1-12-11L7 41z" fill="#f58220"/><circle cx="28" cy="27" r="9" fill="#fff"/><circle cx="28" cy="27" r="5.500" fill="#0b4a94"/></svg></span>
        <span><svg viewBox="0 0 46 46"><circle cx="23" cy="23" r="23" fill="#4dbb84"/><g fill="none" stroke="#e6fff0" stroke-width="1.600"><ellipse cx="23" cy="23" rx="16" ry="6"/><ellipse cx="23" cy="23" rx="16" ry="6" transform="rotate(60 23 23)"/><ellipse cx="23" cy="23" rx="16" ry="6" transform="rotate(120 23 23)"/></g><circle cx="23" cy="23" r="2.500" fill="#fff"/></svg></span>
        <span><svg viewBox="0 0 46 46"><path d="M30 14L44 0l-1 22-12 8zM0 45l10-10 8 4-9 6z" fill="#bdbdbd"/><ellipse cx="25" cy="32" rx="18" ry="7" fill="none" stroke="#4c7a1e" stroke-width="3"/><path d="M13 30l7-14 9-3 8 8-2 14-9 4-11-2z" fill="#bd6a67"/></svg></span>
        <span class="run dbl"><svg viewBox="0 0 46 46"><circle cx="23" cy="23" r="21.500" fill="#fcc934"/><path d="M4.400 12.300A21.500 21.500 0 0 0 21 44.400L31 28 14 28z" fill="#1a9a56"/><path d="M4.400 12.300A21.500 21.500 0 0 1 41.600 13H23L13 26z" fill="#e04a3f"/><circle cx="23" cy="23" r="10" fill="#fff"/><circle cx="23" cy="23" r="8" fill="#4a86ee"/></svg></span>
        <span class="run"><svg viewBox="0 0 46 46"><circle cx="23" cy="23" r="21.500" fill="#1ed760"/><path d="M10 16q14-5 27 3M11 23q12-4 23 3M12 30q10-3 19 2.500" fill="none" stroke="#10180f" stroke-width="4" stroke-linecap="round"/></svg></span>
        <span class="run"><svg viewBox="0 0 46 46"><path d="M6 6h34v20L28 40H6z" fill="#fff"/><path d="M23 40V25h14z" fill="#20180f"/></svg></span>
        <span class="run"><svg viewBox="0 0 46 46"><path d="M3 4h24l7 7v33H3z" fill="#f2f2ee"/><path d="M5 32h27v10H5z" fill="#7bc51d"/><path d="M5 26h27v6H5z" fill="#e8de3c"/><path d="M8 24q2-9 9-7l3-4 7 2-1 7 3 7-5 6-9-1-6-3z" fill="#4ca51f"/><path d="M4 6h22" stroke="#777" stroke-width="4" stroke-dasharray="2 2"/><path d="M43 4L34 32" stroke="#e79a24" stroke-width="4"/><path d="M43.500 2l-1.500 5" stroke="#c33" stroke-width="4"/></svg></span>
        <span class="run"><svg><use href="#qgis"/></svg></span>
        <span class="run active"><svg viewBox="0 0 46 46"><path d="M22 7h19v31H22z" fill="#fff"/><path d="M27 12h5M34 12h5M27 18h5M34 18h5M27 24h5M34 24h5M27 30h5M34 30h5" stroke="#217346" stroke-width="3"/><path d="M2 7l24-4v40L2 39z" fill="#1f7244"/><path d="M9 15l9 16M18 15L9 31" stroke="#fff" stroke-width="3"/></svg></span>
      </div>
      <svg class="tray" viewBox="0 0 284 32"><g fill="none" stroke="#fff" stroke-width="2"><circle cx="21" cy="6" r="5"/><path d="M15 18q2-6 6-6 6 1 7 8"/><circle cx="9" cy="18" r="4.500"/><path d="M2 31q1-8 7-8t7 8"/><path d="M73 22l11-10 11 10"/><path d="M124 10h20v15h-20z"/><path d="M213 28q1-20 20-21M219 28q1-14 14-15M225 28q1-8 8-9" stroke-width="1.700"/><path d="M255 12h4l6-6v20l-6-6h-4z"/><path d="M270 11l10 10M280 11l-10 10"/></g><path d="M127 12h14v11h-14zM230 25h4v4h-4zM116 8h8v7h-3v8h-2v-8h-3zM117 4h2v4h-2zM121 4h2v4h-2z" fill="#fff"/><path d="M162 22q-3-6 3-8 1-9 8-7 8-2 10 6 6 2 6 9l-8 6h-14z" fill="#f2f4fb"/><circle cx="181" cy="21" r="8.500" fill="#dfe9ff"/><path d="M176 22q0-6 5-6t5 3M186 21q0 6-5 6t-5-3" fill="none" stroke="#1f5fc4" stroke-width="2.600"/></svg>
      <span class="lang">CAT</span>
      <span class="clock"><span>13:20</span><span>03/07/2018</span></span>
      <span class="notif"><svg viewBox="0 0 32 30"><path d="M0 0h31v22H14l-6 6v-6H0z" fill="#fff"/><path d="M6 6h19M6 11h19M6 16h19" stroke="#20180f" stroke-width="2"/></svg><b>3</b></span>
      <i class="edge"></i>
    </footer>
  </div>

  <div class="mini">
    <div class="m1">
      <span class="combo">Calibri<svg class="caret"><use href="#caret"/></svg></span><span class="combo">11<svg class="caret"><use href="#caret"/></svg></span>
      <svg class="i26"><use href="#growA"/></svg><svg class="i26"><use href="#shrinkA"/></svg><svg class="i30"><use href="#money"/></svg><svg class="caret"><use href="#caret"/></svg><span class="pct">%</span><svg class="comma"><use href="#comma"/></svg><svg class="i30"><use href="#merge"/></svg>
    </div>
    <div class="m2">
      <b>B</b><em>I</em><svg class="lines"><use href="#al-center"/></svg><svg class="i31"><use href="#bucket"/></svg><svg class="caret"><use href="#caret"/></svg><svg class="i31"><use href="#fontcol"/></svg><svg class="caret"><use href="#caret"/></svg><svg class="i26"><use href="#borders"/></svg><svg class="caret"><use href="#caret"/></svg><svg class="i26"><use href="#decinc"/></svg><svg class="i26"><use href="#decdec"/></svg><svg class="i26"><use href="#brush"/></svg>
    </div>
  </div>

  <ul class="menu">
    <li><svg class="i26"><use href="#cut"/></svg><span>Cu<u>t</u></span></li>
    <li><svg class="i26"><use href="#copy"/></svg><span><u>C</u>opy</span></li>
    <li class="head"><svg class="i28"><use href="#paste"/></svg><b>Paste Options:</b></li>
    <li class="picon"><svg class="i36"><use href="#paste"/></svg></li>
    <li class="dis"><span>Paste <u>S</u>pecial...</span></li>
    <li class="sep"></li>
    <li><svg class="i26" viewBox="0 0 26 26"><circle cx="13" cy="10" r="10.500" fill="#fff" stroke="#4a80b8" stroke-width="2"/><path d="M13 4v3M13 8v8" stroke="#555" stroke-width="3"/></svg><span>Smart <u>L</u>ookup</span></li>
    <li class="sep"></li>
    <li><span><u>I</u>nsert...</span></li>
    <li><span><u>D</u>elete...</span></li>
    <li><span>Clear Co<u>n</u>tents</span></li>
    <li class="sep"></li>
    <li><svg class="i26" viewBox="0 0 26 26"><path d="M1 1h24v24H1z" fill="#fff" stroke="#666" stroke-width="1.600"/><path d="M1 1h24v3H1z" fill="#666"/><path d="M4 6h13v5H4z" fill="#da5f3c"/><path d="M4 12h17v5H4z" fill="#4a80b8"/><path d="M4 19h14v4H4z" fill="#5fa487"/></svg><span><u>Q</u>uick Analysis</span></li>
    <li><span>Filt<u>e</u>r</span><svg class="sub" viewBox="0 0 6 12"><path d="M0 0v12l6-6z" fill="#666"/></svg></li>
    <li><span>S<u>o</u>rt</span><svg class="sub" viewBox="0 0 6 12"><path d="M0 0v12l6-6z" fill="#666"/></svg></li>
    <li class="sep"></li>
    <li><svg class="i26" viewBox="0 0 26 26"><path d="M2 2h22v17H12l-5 5v-5H2z" fill="#fff" stroke="#777" stroke-width="1.600"/></svg><span>Insert Co<u>m</u>ment</span></li>
    <li class="sep"></li>
    <li class="hover"><svg class="i26" viewBox="0 0 26 28"><path d="M1 1h22v26H1z" fill="#fff" stroke="#666" stroke-width="1.600"/><path d="M1 1h22v5H1z" fill="#4a80b8"/><path d="M4 11h16M4 16h16M4 21h16" stroke="#666" stroke-width="1.600"/></svg><span><u>F</u>ormat Cells...</span></li>
    <li><span>Pic<u>k</u> From Drop-down List...</span></li>
    <li><span>Define N<u>a</u>me...</span></li>
    <li><svg class="link-i" viewBox="0 0 29 31"><g fill="none" stroke="#777" stroke-width="1.500"><circle cx="12" cy="11" r="10.500"/><ellipse cx="12" cy="11" rx="5" ry="10.500"/><path d="M2 7h20M2 15h20M12 0v21"/></g><path d="M5 19h24v12H5z" fill="#fff"/><path d="M17 21h-6q-4 0-4 4t4 4h3M18 29h6q4 0 4-4t-4-4h-3M12 25h11" fill="none" stroke="#4a80b8" stroke-width="3"/></svg><span>L<u>i</u>nk</span><i class="split"></i><svg class="sub" viewBox="0 0 6 12"><path d="M0 0v12l6-6z" fill="#666"/></svg></li>
  </ul>

  <div class="backdrop">
    <div class="dialog" role="dialog">
      <div class="dtitle"><span>Format Cells</span><span class="q">?</span><svg viewBox="0 0 20 20"><path d="M1 1l18 18M19 1L1 19" stroke="#000" stroke-width="1.700"/></svg></div>
      <div class="dtabs"><span class="on"><i>Number</i></span><span>Alignment</span><span>Font</span><span>Border</span><span>Fill</span><span>Protection</span></div>
      <div class="page">
        <div class="cat">
          <label><u>C</u>ategory:</label>
          <div class="list">
            <div class="items"><span>General</span><span class="on">Number</span><span>Currency</span><span>Accounting</span><span>Date</span><span>Time</span><span>Percentage</span><span>Fraction</span><span>Scientific</span><span>Text</span><span>Special</span><span>Custom</span></div>
            <div class="lsb"><svg viewBox="0 0 16 10"><path d="M1 9l7-7 7 7" fill="none" stroke="#bbb" stroke-width="3"/></svg><svg viewBox="0 0 16 10"><path d="M1 1l7 7 7-7" fill="none" stroke="#bbb" stroke-width="3"/></svg></div>
          </div>
        </div>
        <div class="opts">
          <fieldset><legend>Sample</legend>50437.00</fieldset>
          <div class="dec"><span><u>D</u>ecimal places:</span><span class="spin">2<span class="ud"><i><svg viewBox="0 0 12 6"><path d="M0 6h12L6 0z"/></svg></i><i><svg viewBox="0 0 12 6"><path d="M0 0h12L6 6z"/></svg></i></span></span></div>
          <div class="chk"><i></i><span><u>U</u>se 1000 Separator (,)</span></div>
          <label><u>N</u>egative numbers:</label>
          <div class="list">
            <div class="items"><span class="on">-1234.10</span><span class="red">1234.10</span><span>-1234.10</span><span class="red">-1234.10</span></div>
            <div class="lsb"><svg viewBox="0 0 16 10"><path d="M1 9l7-7 7 7" fill="none" stroke="#bbb" stroke-width="3"/></svg><svg viewBox="0 0 16 10"><path d="M1 1l7 7 7-7" fill="none" stroke="#bbb" stroke-width="3"/></svg></div>
          </div>
        </div>
        <p>Number is used for general display of numbers.&nbsp; Currency and Accounting offer specialized formatting for<br>monetary value.</p>
      </div>
      <div class="btns"><span class="ok">OK</span><span>Cancel</span></div>
    </div>
  </div>

  <div class="mark mark-col"></div>
  <div class="mark mark-menu"></div>
  <svg class="arrow" viewBox="0 0 242 914"><path d="M0 908h94V24h136" fill="none" stroke="#2d3e57" stroke-width="12.500"/><path d="M201 2h18l21 22-21 22h-18l17-22z" fill="#2d3e57"/></svg>
  <p class="note note-sel">seleccionar celdas</p>
  <p class="note note-fmt">formato de celdas: número</p>
</main>
</body>
</html>
```
FILE: styles.css
```css
*{box-sizing:border-box}
body{margin:0;background:#fff;font-family:"Open Sans","Noto Sans",sans-serif;font-size:20.9px;line-height:1;color:#262626}
.defs{position:absolute}
svg{display:block;flex:none}
i{font-style:normal}
p,h1,ul{margin:0;padding:0}
.slide{position:relative;width:3508px;height:2480px;border:2px solid #2d3e57;padding:102px 0 0 276px;overflow:hidden}
.title{width:809px;height:137px;background:#0ff;color:#2d3e57;font:italic 700 99.500px/129px "Open Sans",sans-serif;padding-left:42px;white-space:nowrap;letter-spacing:-.7px}

.window{width:2953px;height:1662px;margin-top:169px;display:flex;flex-direction:column;overflow:hidden;white-space:nowrap}
.i26{width:26px;height:27px}
.i28{width:28px;height:28px}
.i30{width:30px;height:30px}
.i31{width:31px;height:30px}
.i36{width:34px;height:36px}
.lines{width:28px;height:18px}
.caret{width:10px;height:6px;display:inline-block}
.faint{opacity:.5}
.up{transform:rotate(180deg)}

.titlebar{height:65px;flex:none;background:#227447;display:flex;align-items:center;color:#fff;padding-bottom:3px}
.autosave{width:108px;margin-left:43px;color:#4f966d;font-size:21.6px}
.toggle{width:72px;height:31px;border:2px solid #4f966d;border-radius:16px;color:#4f966d;font-size:17.5px;display:flex;align-items:center;gap:15px;padding-left:7px}
.toggle i{width:13px;height:13px;border-radius:50%;background:#4f966d}
.save{margin-left:31px}
.undo{width:112px;height:24px;margin-left:31px}
.qat{width:8px;height:10px;margin-left:30px}
.doc{margin-left:796px;width:1073px;font-size:21.2px;letter-spacing:.33px}
.warn{width:30px;height:28px}
.user{margin-left:8px;width:265px;font-size:21.8px;letter-spacing:.15px}
.winbtns{width:286px;height:20px}

.tabs{height:58px;flex:none;background:#227447;color:#fff;display:grid;grid-template-columns:117px 101px 98px 165px 134px 90px 114px 91px 111px 41px 1779px 45px 1fr;align-items:center;text-align:center}
.tabs span:first-child{padding-right:6px}
.tabs .on{background:#f2f2f2;color:#227447;height:58px;line-height:58px}
.tabs span:nth-child(9){padding-right:20px}
.search{width:28px;height:29px}
.tabs .tell,.tabs .share{text-align:left}
.tell{color:#d3e6da;padding-top:3px;font-size:21.2px;letter-spacing:.4px}
.share-i{width:32px;height:29px}

.ribbon{height:172px;flex:none;background:#f2f2f2;border-bottom:2px solid #cfcfcf;display:flex}
.vsep{width:2px;height:158px;margin-top:6px;background:#d2d2d2;flex:none}
.grp{display:flex;flex-direction:column;flex:none}
.body{height:140px;display:flex}
.foot{height:32px;display:flex;align-items:center;font-size:19px}
.foot span{flex:1;text-align:center}
.launch{width:14px;height:14px;margin:0 8px}
.clip{width:288px}.font{width:359px}.align{width:474px}.number{width:246px}.styles{width:907px}.cells-g{width:245px}.editing{width:340px}
.big{display:flex;flex-direction:column;align-items:center;padding-top:12px;width:77px;flex:none}
.big .ic{width:57px;height:57px}
.big span{height:31px;line-height:31px;text-align:center}
.big .ic+span{margin-top:6px}
.cond,.fmt{font-size:20.600px}
.paste-b{width:89px;color:#a6a6a6}
.paste-b .ic{width:52px;height:59px;margin-left:8px}
.paste-b .ic+span{margin-top:4px}
.big .caret{margin-bottom:3px}
.cmds div{display:flex;align-items:center;height:43.500px}
.cmds{padding-top:6px}
.cmds .i26{margin-right:8px}
.cmds .caret{margin-left:7px}
.cmds .far{margin-left:18px}
.stack{flex-direction:column;padding-top:21px;display:flex}
.r1{height:41px;display:grid;align-items:center;justify-items:start}
.r2{height:40px;margin-top:17px;display:grid;align-items:center;justify-items:start}
.font .r1{grid-template-columns:174px 104px 38px auto;padding-left:6px}
.font .r2{grid-template-columns:39px 38px 34px 22px 14px 38px 22px 12px 40px 20px 40px auto;padding-left:17px}
.r2 b,.r2 em,.r2 u,.m2 b,.m2 em{font-weight:700;font-size:22px;color:#555}
.r2 em,.m2 em{font-family:"Liberation Serif",serif;font-size:25px;padding-left:3px}
.combo{display:flex;align-items:center;justify-content:space-between;height:42px;border:2px solid #c6c6c6;background:#fff;width:176px;padding:0 7px 0 3px;color:#444}
.combo.size{width:94px}
.ssep{width:1.500px;height:38px;background:#d4d4d4}
.msep{width:2px;height:110px;margin-top:15px;background:#d4d4d4}
.al-l{width:226px}
.al-l .r1{grid-template-columns:41px 33px 46px 14px 34px auto;padding-left:12px}
.al-l .r2{grid-template-columns:38px 42px 37px 14px 37px auto;padding-left:15px}
.pressed{width:40px;height:41px;background:#c6c6c6;padding:9px 6px}
.al-r{flex:1}
.al-r .r1{grid-template-columns:31px auto 1fr;padding-left:14px}
.al-r .r2{grid-template-columns:35px 179px auto;padding-left:10px}
.abc{font-size:17px;font-weight:600;line-height:13px;color:#555}
.abc svg{display:inline-block;width:14px;height:10px}
.number .r1{padding-left:6px}
.number .combo{width:235px}
.number .r2{grid-template-columns:41px 21px 49px 31px 14px 39px auto;padding-left:11px}
.pct{font-size:28px;color:#555}
.comma{width:9px;height:16px}
.cond{width:136px;margin-left:5px}
.fmt{width:110px}
.gallery{width:645px;height:120px;margin-top:9px;border:2px solid #ababab;display:flex;background:#fff}
.swatches{width:616px;padding:9px 0 0 5px;display:grid;grid-template-columns:192px 192px 193px;grid-template-rows:43px 43px;column-gap:12px;row-gap:12px}
.sw{font-size:22px;display:flex;align-items:center;padding-left:8px}
.normal{box-shadow:0 0 0 6px #c6c6c6;color:#000}
.bad{background:#ffc7ce;color:#9c0006}
.good{background:#c6efce;color:#006100}
.neutral{background:#ffeb9c;color:#9c5700}
.calc{background:#f2f2f2;border:2px solid #7f7f7f;color:#fa7d00;font-weight:700;font-size:20.600px;padding-left:6px}
.check{background:#a5a5a5;border:5px double #3f3f3f;color:#fff;font-weight:700;font-size:21.600px;padding-left:4px}
.gscroll{flex:1;border-left:2px solid #ababab;display:grid;grid-template-rows:39px 37px 1fr}
.gscroll span{display:flex;align-items:center;justify-content:center;border-bottom:2px solid #c6c6c6}
.gscroll span:first-child{background:#e6e6e6}
.gscroll .more{flex-direction:column;border:0;gap:3px}
.gscroll .more::before{content:"";width:14px;height:2px;background:#666}
.cells-g .body{padding-left:6px}
.editing .body{padding-left:14px}
.editing .cmds{width:154px;padding-top:5px}
.editing .cmds div{height:41.500px}
.editing .cmds .i26{margin-right:7px}
.sort{width:86px}
.find{width:73px}
.collapse{width:18px;height:10px;margin:150px 0 0 45px}

.fbar{height:83px;flex:none;background:#e6e6e6;display:flex;align-items:flex-start;padding:19px 0 0 9px}
.box{height:46px;background:#fff;border:2px solid #c8c8c8;display:flex;align-items:center;color:#444;font-size:22.500px}
.name{width:195px;justify-content:space-between;padding:0 12px 0 10px}
.dots{width:4px;height:20px;margin:12px 27px 0 26px;background:repeating-linear-gradient(#aaa 0 4px,transparent 4px 8px)}
.fx{width:210px;padding-left:21px}
.fx svg{width:100px;height:24px}
.fx em{font:italic 31px "Liberation Serif",serif;margin-left:40px;color:#555}
.input{width:2466px;margin-left:6px;padding:0 6px 0 20px;justify-content:space-between}
.chev{width:16px;height:10px}

.sheet{height:1119px;flex:none;background:#e6e6e6;display:flex}
.grid{width:2914px;border-right:2px solid #ababab;border-bottom:3px solid #999;overflow:hidden;font-family:Lato,"Open Sans",sans-serif;font-size:24.600px;color:#000;font-variant-ligatures:none}
.cols{display:grid;grid-template-columns:52px 175px 296.500px 244.500px 233px 260px 249px 122.700px 260.200px repeat(8,123.050px) 1fr;height:37px;border-bottom:2px solid #999;text-align:center;line-height:40px;background:#e6e6e6}
.cols span{border-right:1.500px solid #ababab;height:35px}
.cols .corner{background:linear-gradient(135deg,transparent 50%,#b4b4b4 50%) 22px 7px/24px 25px no-repeat}
.cols .sel{background:#d2d2d2;color:#217346}
.rows{height:1079px;overflow:hidden;background:
 linear-gradient(#d4d4d4,#d4d4d4) 1260px 0/1.500px 100% no-repeat,
 linear-gradient(#d4d4d4,#d4d4d4) 1509px 0/1.500px 100% no-repeat,
 linear-gradient(#d4d4d4,#d4d4d4) 1632px 0/1.500px 100% no-repeat,
 repeating-linear-gradient(90deg,#d4d4d4 0 1.500px,transparent 1.500px 123.050px) 1892px 0/1020px 100% no-repeat,#fff}
.row{height:36.920px;display:grid;grid-template-columns:52px 175px 296.500px 244.500px 233px;border-bottom:2px solid #d4d4d4}
.row span{border-right:1.500px solid #d4d4d4;padding-left:5px;line-height:39px;overflow:hidden;height:35px;letter-spacing:.48px}
.row .n{text-align:right;padding:0 5px 0 0;letter-spacing:-.1px}
.row .rh{background:#e6e6e6;text-align:center;padding:0;height:36.920px;border-bottom:1.500px solid #ababab;border-right-color:#ababab;letter-spacing:0}
.row.s .rh{background:#d2d2d2;color:#217346;border-right:3px solid #217346}
.row .v{background:#c6c6c6;margin-left:-1px;border-left:3px solid #217346;height:36.920px;border-bottom:2px solid #aaa;border-right:3px solid #217346;padding-right:3px}
.first .v{background:#fff;box-shadow:0 -3px #217346;border-bottom:0}
.row:nth-child(1) span:last-child{height:33px}
.vscroll{width:29px;margin:4px 0 0 5px;display:flex;flex-direction:column}
.sb{height:29px;background:#fff;border:1.500px solid #ababab;display:flex;align-items:center;justify-content:center}
.sb svg{width:14px;height:8px}
.thumb{height:360px;background:#fff;border:1.500px solid #ababab}
.track{flex:1;background:#dadada}

.sheettabs{height:46px;flex:none;background:#e6e6e6;border-bottom:2px solid #c6c6c6;display:flex;align-items:flex-start}
.arrows{width:52px;height:14px;margin:15px 0 0 43px}
.stab{width:122px;height:40px;margin:-1px 0 0 63px;background:#fff;border:solid #999;border-width:0 1.500px;border-bottom:3px solid #217346;color:#217346;font-weight:700;font-size:24px;text-align:center;line-height:36px}
.plus{width:32px;height:32px;margin:6px 0 0 50px}
.sheettabs .dots{margin:12px 24px 0 1405px}
.hb{width:28px;height:29px;margin-top:7px;background:#fff;border:1.500px solid #ababab;display:flex;align-items:center;justify-content:center}
.hb svg{width:8px;height:14px}
.hthumb{width:994px;height:29px;margin-top:7px;background:#fff;border:2px solid #ababab}
.htrack{width:68px;height:29px;margin-top:7px;background:#dadada}
.right{margin-left:4px}

.status{height:42px;flex:none;background:#f3f3f3;display:flex;align-items:center;font-size:18.200px;color:#333}
.ready{width:1945px;padding-left:11px}
.avg{width:190px;padding-left:11px}
.cnt{width:119px;padding-left:9px}
.sum{width:182px;padding-left:0}
.vw{width:64px;height:42px;display:flex;align-items:center;justify-content:center}
.vw.on{background:#c6c6c6}
.vw svg{width:26px;height:26px}
.zoomer{width:236px;height:22px;margin-left:10px}
.pc{margin-left:18px}

.taskbar{flex:1;background:#20180f;display:flex;align-items:center;color:#fff}
.apps{display:grid;grid-template-columns:92.800px repeat(20,95.430px) 94px;height:100%;margin-right:254px}
.apps>span{display:flex;align-items:center;justify-content:center;position:relative}
.apps svg{width:46px;height:46px}
.apps .run{background:linear-gradient(#76b9ed,#76b9ed) center bottom/79px 5px no-repeat}
.apps .dbl{background:linear-gradient(90deg,transparent 62px,#5f93bd 62px) center bottom/79px 5px no-repeat,linear-gradient(#76b9ed,#76b9ed) center bottom/79px 5px no-repeat}
.apps .active{background:linear-gradient(#76b9ed,#76b9ed) center bottom/94px 5px no-repeat,#4b443e}
.adobe{width:44px;height:42px;border:3px solid;font-size:24px;display:flex;align-items:center;justify-content:center;letter-spacing:-1px}
.id{color:#e9389b;background:#3d0a24}
.ps{color:#74b6ff;background:#100b50}
.ai{color:#fa9d1d;background:#2f1b03}
.tray{width:284px;height:32px}
.lang{width:82px;padding-left:22px;font-size:20.500px}
.clock{width:128px;margin-left:0;display:flex;flex-direction:column;align-items:center;gap:13px;font-size:21.300px}
.notif{position:relative;width:32px;height:30px;margin-left:29px}
.notif svg{width:32px;height:30px}
.notif b{position:absolute;left:16px;top:14px;width:31px;height:32px;border-radius:50%;background:#333;border:1.500px solid #999;font-size:19px;text-align:center;line-height:29px}
.edge{width:1.500px;height:100%;background:#6b655e;margin-left:38px}

.mini{position:absolute;left:1266px;top:1034px;width:474px;height:102px;background:#fff;border:1.500px solid #c6c6c6;box-shadow:2px 3px 5px rgba(0,0,0,.15);padding:6px 0 0 6px}
.m1,.m2{display:grid;align-items:center;justify-items:start;height:45px}
.m1{grid-template-columns:116px 96px 38px 35px 41px 21px 46px 32px auto}
.m2{grid-template-columns:47px 32px 37px 43px 17px 43px 17px 43px 19px 40px 40px auto;height:44px;padding-left:5px}
.m1 .combo{width:117px;height:45px;padding-right:6px}
.m1 .combo+.combo{width:86px;padding-right:7px}
.m2 b{padding-left:2px}

.menu{position:absolute;left:1267px;top:1165px;width:384px;height:822px;background:#fff;border:2px solid #c6c6c6;box-shadow:2px 2px 4px rgba(0,0,0,.12);list-style:none;padding-top:2px;color:#555;white-space:nowrap;font-size:21.100px}
.menu li{height:46px;display:grid;grid-template-columns:49px 266px 10px auto;padding-left:8px;align-items:center}
.menu li>span,.menu b{grid-column:2}
.menu svg{grid-column:1;grid-row:1}
.menu u,.dialog u{text-decoration-thickness:1.500px;text-underline-offset:3px}
.menu .head{height:42px;background:linear-gradient(#ebebeb,#ebebeb) 46px 0/333px 42px no-repeat}
.menu .head b{font-size:21.300px;color:#666}
.menu .picon{height:59px}
.menu .picon svg{grid-column:2;margin:0 0 0 2px}
.menu .dis{color:#b1b1b1}
.menu .sep{height:5px;background:linear-gradient(#e1e1e1,#e1e1e1) 60px 1px/318px 2px no-repeat}
.menu .hover{background:#c6c6c6;color:#262626;margin:0 2px 0 0}
.menu .sub{grid-column:4;width:6px;height:12px;margin-left:19px}
.link-i{width:29px;height:31px}
.split{grid-column:3;grid-row:1;height:28px;border-left:1.500px solid #ddd;margin-left:10px}

.backdrop{position:absolute;left:1954px;top:694px;width:1104px;height:997px;overflow:hidden;padding:23px 0 0 11px;background:
 linear-gradient(#e4e4e4 0 14px,#c4c4c4 14px 15px,#fafafa 15px 60px,#c0c0c0 60px 61px,#dcdcdc 61px 117px,#aaa 117px 118px,transparent 118px) no-repeat,
 repeating-linear-gradient(90deg,#c8c8c8 0 1.500px,transparent 1.500px 126.800px) 44px 980px/1020px 17px no-repeat,
 repeating-linear-gradient(transparent 0 36.400px,#c8c8c8 36.400px 37.900px) 0 118px,#fff}
.dialog{width:1071px;height:958px;background:#f0f0f0;border:1.500px solid #1883d7;border-top-width:3px;border-bottom-width:2px;box-shadow:4px 6px 22px 4px rgba(0,0,0,.34);font-size:19.200px;letter-spacing:.1px;color:#000;white-space:nowrap}
.dtitle{height:57px;background:#fff;display:flex;align-items:center;font-size:21.900px;padding-left:14px}
.dtitle span:first-child{width:911px}
.dtitle .q{font-size:24px;width:87px}
.dtitle svg{width:20px;height:20px}
.dtabs{display:grid;grid-template-columns:130px 132px 128px 128.500px 128.500px 134px;align-items:end;margin:15px 0 0 15px}
.dtabs span{height:40px;border:1.500px solid #d9d9d9;border-left:0;border-bottom:0;display:flex;align-items:center;justify-content:center;padding-top:3px}
.dtabs .on{height:46px;background:#fff;border-left:1.500px solid #d9d9d9;margin-bottom:-2px;position:relative;padding:0 3px 0 0}
.dtabs .on i{border:1.500px dotted #000;width:117px;height:34px;display:flex;align-items:center;justify-content:center;padding-top:2px}
.page{width:1035px;height:754px;margin-left:15px;background:#fff;border:1.500px solid #dcdcdc;padding:24px 0 0 21px;display:grid;grid-template-columns:306px 688px;grid-template-rows:565px auto}
.page label{display:block;line-height:20px}
.cat .list{margin-top:9px;width:284px;height:518px}
.list{border:1.500px solid #828790;display:flex;padding:2px 2px 4px}
.items{flex:1;display:flex;flex-direction:column;margin-right:2px}
.items span{height:27.050px;line-height:28px;padding-left:5px}
.items .on{background:#3399ff;color:#fff}
.items .red{color:#f00}
.lsb{width:32px;background:#f0f0f0;display:flex;flex-direction:column;justify-content:space-between;align-items:center;padding:12px 0}
.lsb svg{width:16px;height:10px}
.opts fieldset{margin:32px 0 0;height:76px;border:1.500px solid #dcdcdc;padding:22px 0 0 21px}
legend{padding:0 2px;margin-left:-9px;line-height:22px}
.dec{display:flex;align-items:center;margin-top:9px;height:41px}
.dec>span:first-child{width:165px}
.spin{width:133px;height:41px;border:2px solid #abadb3;display:flex;align-items:center;justify-content:space-between;padding:0 2px 0 6px}
.ud{display:grid;gap:2px}
.ud i{width:30px;height:16px;background:#eee;border:1.500px solid #aaa;display:flex;align-items:center;justify-content:center}
.ud svg{width:12px;height:6px}
.chk{display:flex;align-items:center;gap:9px;margin:15px 0 22px}
.chk span{padding-top:2px}
.chk i{width:25px;height:25px;border:1.500px solid #333}
.opts .list{margin-top:9px;width:688px;height:303px}
.page p{grid-column:1/3;line-height:27px;padding-top:15px;letter-spacing:.43px}
.btns{display:flex;justify-content:flex-end;gap:22px;padding:20px 15px 0 0}
.btns span{width:179px;height:47px;background:#e1e1e1;border:2px solid #adadad;display:flex;align-items:center;justify-content:center;padding-top:3px}
.btns .ok{border:3.500px solid #0078d7}

.mark{position:absolute;border:12.500px solid #2d3e57}
.mark-col{left:997px;top:814px;width:291px;height:1119px}
.mark-menu{left:1245px;top:1739px;width:454px;height:132px}
.arrow{position:absolute;left:1697px;top:885px;width:242px;height:914px}
.note{position:absolute;color:#2d3e57;font:italic 700 49px/60px "Open Sans",sans-serif;white-space:nowrap}
.note-sel{left:1007px;top:742px;letter-spacing:-.1px}
.note-fmt{left:2555px;top:1154px;letter-spacing:-.25px}
```
